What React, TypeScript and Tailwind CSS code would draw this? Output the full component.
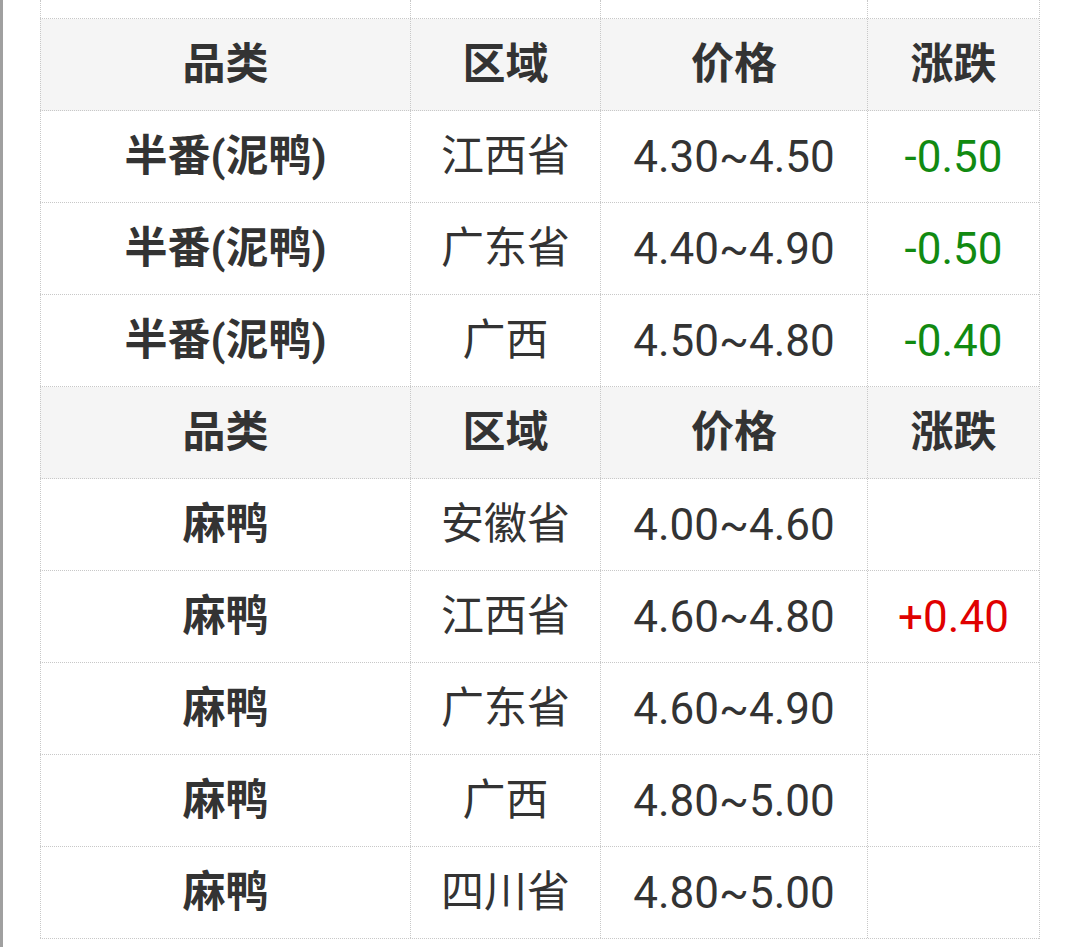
import React from 'react';

type Row = { name: string; region: string; price: string; change?: string };

const group1: Row[] = [
  { name: '半番(泥鸭)', region: '江西省', price: '4.30~4.50', change: '-0.50' },
  { name: '半番(泥鸭)', region: '广东省', price: '4.40~4.90', change: '-0.50' },
  { name: '半番(泥鸭)', region: '广西', price: '4.50~4.80', change: '-0.40' },
];

const group2: Row[] = [
  { name: '麻鸭', region: '安徽省', price: '4.00~4.60' },
  { name: '麻鸭', region: '江西省', price: '4.60~4.80', change: '+0.40' },
  { name: '麻鸭', region: '广东省', price: '4.60~4.90' },
  { name: '麻鸭', region: '广西', price: '4.80~5.00' },
  { name: '麻鸭', region: '四川省', price: '4.80~5.00' },
];

const rowCls =
  'grid grid-cols-[370px_190px_267px_172px] border-b border-dotted border-[#c8c8c8]';
const cellCls =
  'flex items-center justify-center border-l border-dotted border-[#c8c8c8] h-[91px]';

const changeColor = (c?: string) =>
  !c ? '' : c.startsWith('+') ? 'text-[#e00000]' : 'text-[#118a11]';

const Header = () => (
  <div className={`${rowCls} bg-[#f5f5f5] font-bold`}>
    <div className={cellCls}>品类</div>
    <div className={cellCls}>区域</div>
    <div className={cellCls}>价格</div>
    <div className={cellCls}>涨跌</div>
  </div>
);

const DataRow = ({ r }: { r: Row }) => (
  <div className={rowCls}>
    <div className={`${cellCls} font-bold`}>{r.name}</div>
    <div className={cellCls}>{r.region}</div>
    <div className={`${cellCls} text-[44px]`}>{r.price}</div>
    <div className={`${cellCls} text-[44px] ${changeColor(r.change)}`}>{r.change}</div>
  </div>
);

export default function App() {
  return (
    <div
      className="w-[1080px] h-[947px] bg-white border-l-[3px] border-[#a0a0a0] overflow-hidden text-[#333] text-[43px] leading-none"
      style={{ fontFamily: "Roboto, 'Noto Sans CJK SC', sans-serif" }}
    >
      <div className="ml-[37px] w-[1000px] border-r border-dotted border-[#c8c8c8]">
        {/* cut-off row above */}
        <div className={rowCls}>
          <div className="border-l border-dotted border-[#c8c8c8] h-[18px]" />
          <div className="border-l border-dotted border-[#c8c8c8] h-[18px]" />
          <div className="border-l border-dotted border-[#c8c8c8] h-[18px]" />
          <div className="border-l border-dotted border-[#c8c8c8] h-[18px]" />
        </div>
        <Header />
        {group1.map((r, i) => (
          <DataRow key={'a' + i} r={r} />
        ))}
        <Header />
        {group2.map((r, i) => (
          <DataRow key={'b' + i} r={r} />
        ))}
      </div>
    </div>
  );
}
